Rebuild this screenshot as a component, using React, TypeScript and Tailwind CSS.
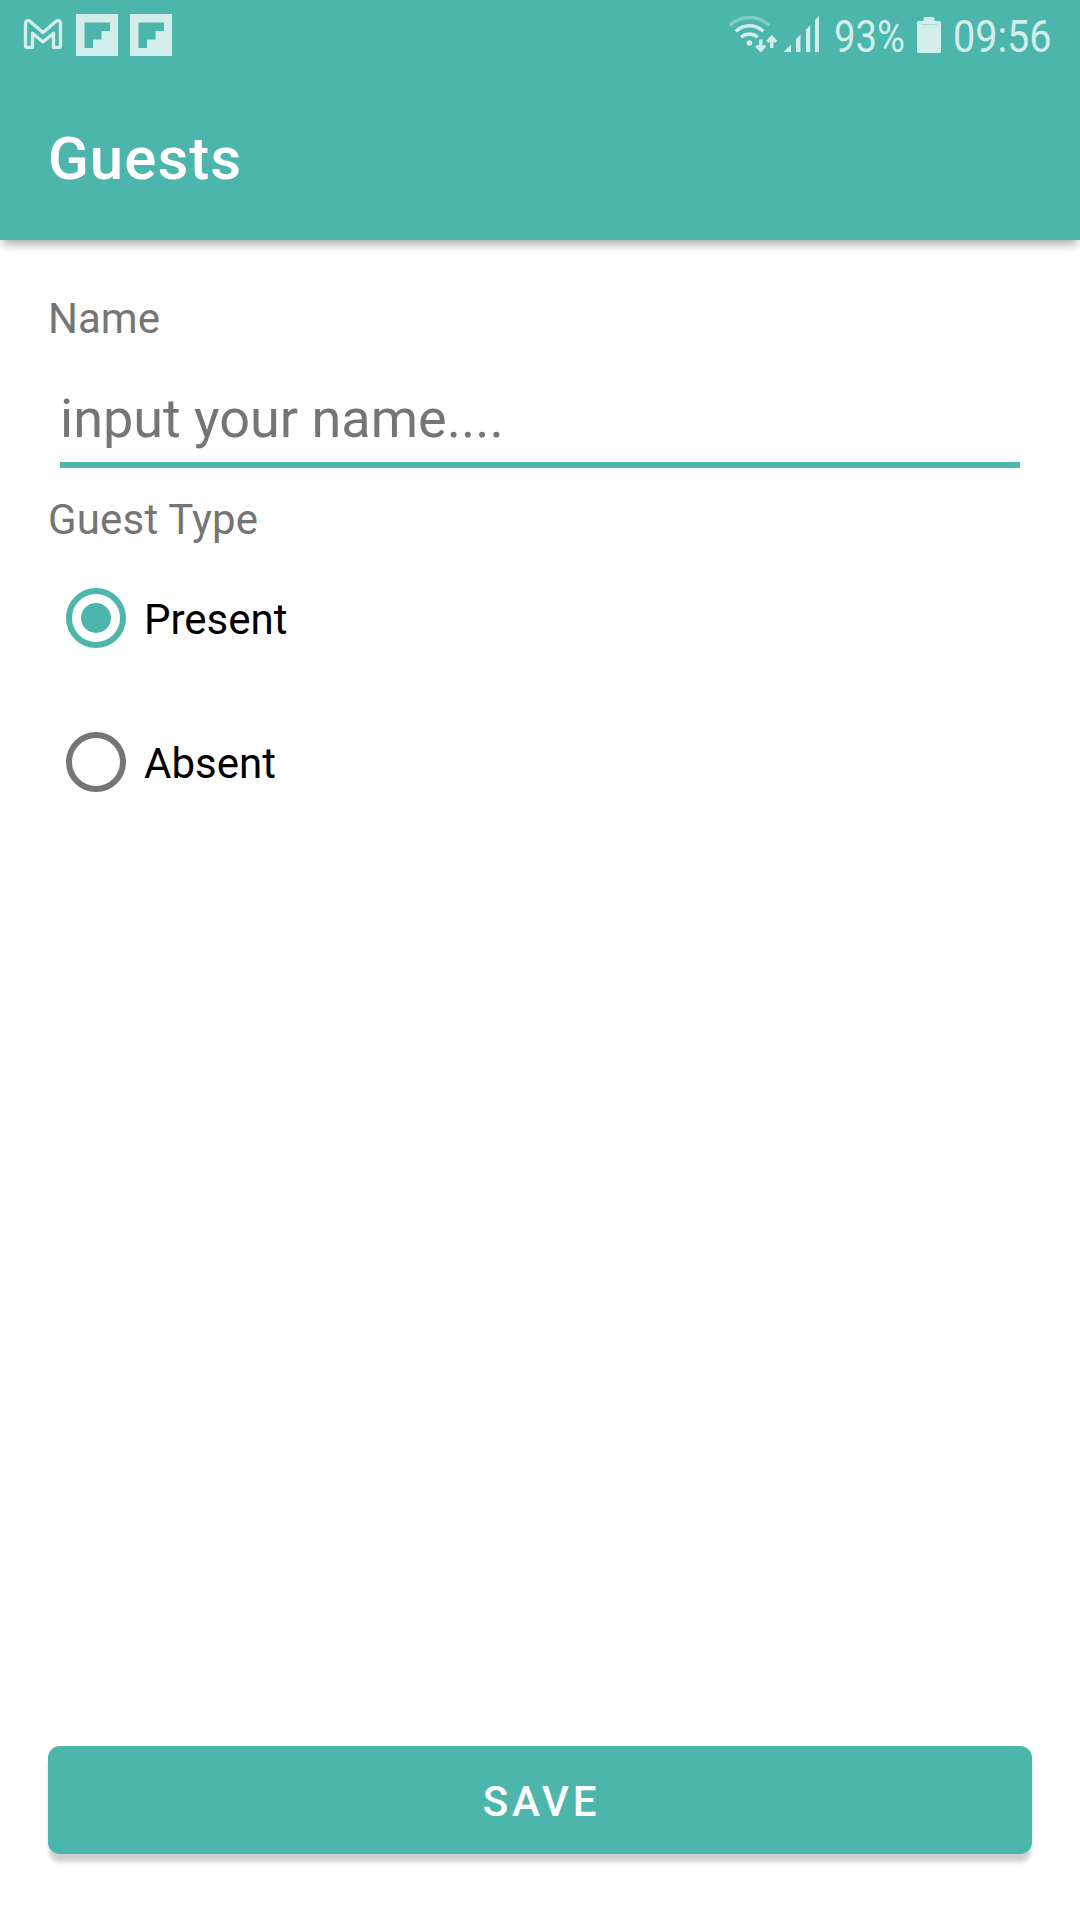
import React from "react";

function GmailIcon() {
  return (
    <svg width="40" height="32" viewBox="23 18 40 32" className="shrink-0" fill="none" stroke="currentColor" strokeWidth="3.3" strokeLinejoin="round">
      <path d="M25.5 23.2C25.5 20.6 28.4 19.9 30.2 21.4L43 32.6L55.8 21.4C57.6 19.9 60.5 20.6 60.5 23.2V45.7Q60.5 47.4 58.8 47.4H53.5V33.2L43 41.9L32.5 33.2V47.4H27.2Q25.5 47.4 25.5 45.7Z" />
    </svg>
  );
}

function FlipboardIcon() {
  return (
    <svg width="42" height="42" viewBox="0 0 42 42" className="shrink-0">
      <path fill="currentColor" fillRule="evenodd" d="M0 0H42V42H0ZM8.5 8.5V34H17V25.5H25.5V17H34V8.5Z" />
    </svg>
  );
}

function WifiIcon() {
  return (
    <svg width="50" height="38" viewBox="728 15 50 38" className="shrink-0" fill="none" stroke="currentColor" strokeWidth="3.4">
      <path opacity="0.4" d="M729.8 25.6A28 28 0 0 1 769.2 25.6" />
      <path d="M735.8 31.4A19.5 19.5 0 0 1 763.4 31.4" />
      <path d="M741.2 37.2A12.3 12.3 0 0 1 757.6 37.2" />
      <circle cx="749.4" cy="43" r="2.8" fill="currentColor" stroke="none" />
      <path d="M760.8 39.5V49.5M756.4 45.6L760.8 50L765.2 45.6M771.8 48V38M767.4 41.9L771.8 37.5L776.2 41.9" />
    </svg>
  );
}

function SignalIcon() {
  return (
    <svg width="36" height="36" viewBox="783 16 36 36" className="shrink-0" fill="currentColor">
      <path d="M783.5 52L791 44.5V52ZM796 39L800.5 34.5V52H796ZM806 29.5L810.2 25.3V52H806ZM815 20L819 16V52H815Z" />
    </svg>
  );
}

function BatteryIcon() {
  return (
    <svg width="24" height="36" viewBox="0 0 24 36" className="shrink-0">
      <path fill="currentColor" d="M8 0H16Q17.5 0 17.5 1.5V4H22.5Q24 4 24 5.5V34.5Q24 36 22.5 36H1.5Q0 36 0 34.5V5.5Q0 4 1.5 4H6.5V1.5Q6.5 0 8 0Z" />
      <path stroke="#a3d9d3" d="M4 7.5H20" />
    </svg>
  );
}

function StatusBar() {
  return (
    <div className="flex h-[72px] items-start justify-between text-[#d3edea]">
      <div className="flex pl-[23px] pt-[14px]">
        <div className="pt-1">
          <GmailIcon />
        </div>
        <div className="ml-[13px] flex gap-3">
          <FlipboardIcon />
          <FlipboardIcon />
        </div>
      </div>
      <div className="flex h-[72px] w-[352px] items-start text-[45px] leading-[53px]">
        <div className="pt-[15px]">
          <WifiIcon />
        </div>
        <div className="ml-[5px] pt-4">
          <SignalIcon />
        </div>
        <div className="ml-[15px] w-[71px] pt-[10px]">
          <span className="block origin-left scale-x-[0.85] whitespace-nowrap">93%</span>
        </div>
        <div className="ml-[12px] pt-[17px]">
          <BatteryIcon />
        </div>
        <div className="ml-[12px] w-[98px] pt-[10px]">
          <span className="block origin-left scale-x-[0.88] whitespace-nowrap">09:56</span>
        </div>
      </div>
    </div>
  );
}

function RadioOption({ label, checked, onSelect }: { label: string; checked: boolean; onSelect: () => void }) {
  return (
    <button
      type="button"
      role="radio"
      aria-checked={checked}
      onClick={onSelect}
      className="flex h-[144px] items-center pl-[18px] text-[42px] leading-[50px] text-black"
    >
      <span
        className={
          checked
            ? "flex size-[60px] items-center justify-center rounded-full border-[6px] border-[#4db6ac]"
            : "flex size-[60px] items-center justify-center rounded-full border-[6px] border-[#757575]"
        }
      >
        {checked && <span className="size-[30px] rounded-full bg-[#4db6ac]" />}
      </span>
      <span className="ml-[18px] pt-1">{label}</span>
    </button>
  );
}

export default function App() {
  const [type, setType] = React.useState("Present");
  return (
    <div className="flex h-[1920px] w-[1080px] flex-col overflow-hidden bg-white font-['Roboto',sans-serif]">
      <header className="h-[240px] shrink-0 bg-[#4db6ac] shadow-[0_6px_10px_-2px_rgba(0,0,0,0.34)]">
        <StatusBar />
        <h1 className="flex h-[168px] items-center pl-12 pt-1.5 text-[60px] font-medium leading-[70px] tracking-[1px] text-white">
          Guests
        </h1>
      </header>
      <main className="flex grow flex-col px-12 pb-[66px] pt-[50px] text-[42px] leading-[57px] text-[#757575]">
        <label htmlFor="name">Name</label>
        <input
          id="name"
          placeholder="input your name...."
          className="mx-3 mt-[28px] h-[93px] border-b-[6px] border-[#4db6ac] text-[54px] outline-none placeholder:text-[#757575]"
        />
        <div className="mt-[23px] tracking-[0.18px]">Guest Type</div>
        <div role="radiogroup" className="-mt-0.5 flex flex-col items-start">
          {["Present", "Absent"].map((t) => (
            <RadioOption key={t} label={t} checked={type === t} onSelect={() => setType(t)} />
          ))}
        </div>
        <button
          type="button"
          className="mt-auto h-[108px] rounded-[12px] bg-[#4db6ac] pl-[3px] pt-0.5 text-[42px] font-medium tracking-[3.75px] text-white shadow-[0_9px_4px_-1px_rgba(0,0,0,0.19),0_0_2px_rgba(0,0,0,0.06)]"
        >
          SAVE
        </button>
      </main>
    </div>
  );
}
